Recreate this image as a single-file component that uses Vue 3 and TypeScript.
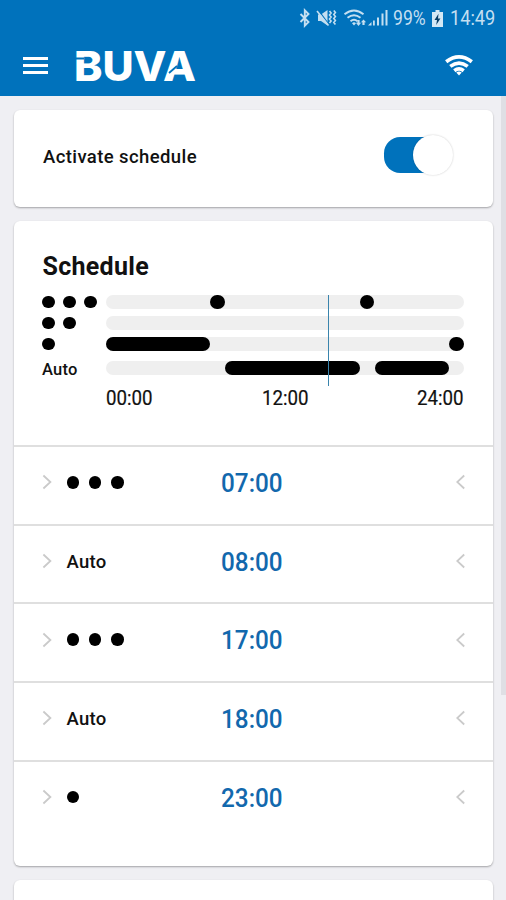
<script setup lang="ts">
interface Segment { from: number; to: number }
interface Track { level: number; segments: Segment[] }
interface Entry { level: number; time: string }

const tracks: Track[] = [
  { level: 3, segments: [{ from: 7, to: 8 }, { from: 17, to: 18 }] },
  { level: 2, segments: [] },
  { level: 1, segments: [{ from: 0, to: 7 }, { from: 23, to: 24 }] },
  { level: 0, segments: [{ from: 8, to: 17 }, { from: 18, to: 23 }] },
]
const entries: Entry[] = [
  { level: 3, time: '07:00' },
  { level: 0, time: '08:00' },
  { level: 3, time: '17:00' },
  { level: 0, time: '18:00' },
  { level: 1, time: '23:00' },
]
const now = 14 + 51 / 60
const pct = (hours: number) => `${(hours / 24) * 100}%`
</script>

<template>
  <div class="screen">
    <header class="header">
      <div class="status">
        <svg class="status-icons" viewBox="0 0 92 20" width="92" height="20">
          <path d="M2.500 6l8 8-3.700 3.700V2.300l3.700 3.700-8 8" fill="none" stroke="#c4dff1" stroke-width="1.900" />
          <path d="M20 6.500h3l6.500-4.500v15.500l-6.500-4.500h-3z" fill="#c4dff1" />
          <path d="M20.500 2.300l10 13.500" stroke="#0072bc" stroke-width="1.200" />
          <path d="M19 3l11.500 14.500" stroke="#c4dff1" stroke-width="1.600" />
          <path d="M31.500 3l1.600 2-1.600 2 1.600 2-1.600 2 1.600 2-1.600 2M35.800 2.500l1.600 2-1.600 2 1.600 2-1.600 2 1.600 2-1.600 2 1.600 2" fill="none" stroke="#c4dff1" stroke-width="1.600" />
          <path d="M46.500 6.300q9.500-7.600 19 0M49.500 9.800q6.500-5.200 13 0M52.500 13.200q3.500-2.700 7 0" fill="none" stroke="#c4dff1" stroke-width="1.900" />
          <g fill="#c4dff1">
            <path d="M54 15.200q2-1.700 4 0l-2 2.300zM59.400 12h2.200v2.800h1.500L60.500 18l-2.600-3.200h1.500zM64.400 17v-2.800h-1.500L65.500 11.500l2.600 2.700h-1.500V17z" />
            <path d="M73.500 14v3.500H70zM75 12.500h1.800v5H75zM79 9.500h2v8h-2zM83.500 5.500h2v12h-2zM87.500 2h2v15.500h-2z" />
          </g>
        </svg>
        <span class="status-text battery-text">99%</span>
        <svg class="battery" viewBox="0 0 11 17" width="11" height="17">
          <path d="M3.500 0h4v2H11v15H0V2h3.500z" fill="#d3e8f5" />
          <path d="M6.500 3.800L2.500 10h2.500l-.8 5 4.200-6.500H6z" fill="#073d66" />
        </svg>
        <span class="status-text clock">14:49</span>
      </div>
      <div class="toolbar">
        <div class="menu"><i /><i /><i /></div>
        <svg class="logo" viewBox="0 0 126 58" width="126" height="58">
          <text x="2" y="44.500" textLength="122" lengthAdjust="spacingAndGlyphs">BUVA</text>
          <path d="M3 22.500h9M97 37l8-7" stroke="#0072bc" stroke-width="1.800" />
        </svg>
        <svg class="wifi" viewBox="0 0 28 22" width="28" height="22">
          <g fill="none" stroke="#fff" stroke-width="3.700">
            <path d="M1.200 7.700q12.800-9.800 25.600 0M5.300 12.400q8.700-6.600 17.400 0M9.300 16.700q4.700-3.600 9.400 0" />
          </g>
          <path d="M11.300 18.500q2.700-2 5.400 0L14 21.500z" fill="#fff" />
        </svg>
      </div>
    </header>

    <main class="content">
      <section class="card activate">
        <span class="activate-label">Activate schedule</span>
        <div class="switch"><div class="knob" /></div>
      </section>

      <section class="card schedule">
        <div class="overview">
          <h2>Schedule</h2>
          <div class="chart">
            <div class="levels">
              <div v-for="t in tracks" :key="t.level" class="level" :class="{ auto: !t.level }">
                <i v-for="n in t.level" :key="n" class="dot" />
                <span v-if="!t.level">Auto</span>
              </div>
            </div>
            <div class="plot">
              <div v-for="t in tracks" :key="t.level" class="track" :class="{ auto: !t.level }">
                <div
                  v-for="s in t.segments"
                  :key="s.from"
                  class="segment"
                  :style="{ left: pct(s.from), width: pct(s.to - s.from) }"
                />
              </div>
              <div class="now" :style="{ left: pct(now) }" />
              <div class="axis"><span>00:00</span><span>12:00</span><span>24:00</span></div>
            </div>
          </div>
        </div>
        <div v-for="e in entries" :key="e.time" class="row">
          <svg class="chevron" viewBox="0 0 10 16" width="10" height="16"><path d="M1.400 1.500L8.400 8l-7 6.500" /></svg>
          <div class="mode">
            <i v-for="n in e.level" :key="n" class="dot" />
            <span v-if="!e.level">Auto</span>
          </div>
          <span class="time">{{ e.time }}</span>
          <svg class="chevron" viewBox="0 0 10 16" width="10" height="16"><path d="M8.200 1.500L1.200 8l7 6.500" /></svg>
        </div>
      </section>

      <section class="card next" />
      <div class="scrollbar" />
    </main>
  </div>
</template>

<style>
body { margin: 0; }
</style>

<style scoped>
.screen {
  width: 506px;
  height: 900px;
  overflow: hidden;
  display: flex;
  flex-direction: column;
  background: #efeff3;
  color: #111;
  font-family: Roboto, "Liberation Sans", sans-serif;
}
.header { flex: none; height: 96px; background: #0072bc; }
.status { display: flex; align-items: center; height: 36px; padding-left: 298px; }
.status-icons { flex: none; }
.status-text {
  color: #c4dff1;
  font-size: 20px;
  line-height: 20px;
  white-space: nowrap;
  transform-origin: left center;
}
.battery-text { width: 34px; margin-left: 3px; transform: scaleX(.88); }
.battery { flex: none; margin-left: 5px; }
.clock { margin-left: 7px; transform: scaleX(.91); }
.toolbar { display: flex; align-items: center; height: 58px; padding-left: 23px; }
.menu { display: flex; flex-direction: column; gap: 4px; width: 25px; }
.menu i { height: 3px; background: #fff; }
.logo { flex: none; margin-left: 24px; overflow: visible; }
.logo text { fill: #fff; font-family: Inter, sans-serif; font-weight: 800; font-size: 41px; }
.wifi { margin-left: 247px; }
.content { position: relative; flex: none; display: flex; flex-direction: column; gap: 14px; padding: 14px 13px 0 14px; }
.card {
  box-sizing: border-box;
  background: #fff;
  border-radius: 6px;
  box-shadow: 0 1px 2px rgba(0, 0, 0, .32);
}
.activate { display: flex; align-items: center; justify-content: space-between; height: 97px; padding: 0 40px 0 29px; }
.activate-label { font-size: 18.500px; font-weight: 500; letter-spacing: .4px; margin-top: -4px; }
.switch { display: flex; justify-content: flex-end; align-items: center; width: 69px; height: 36px; margin-top: -7px; border-radius: 18px 20px 20px 18px; background: linear-gradient(90deg, #0072bc 45px, transparent 45px); }
.knob { width: 40px; height: 40px; flex: none; border-radius: 50%; background: #fff; box-shadow: 0 0 2px rgba(0, 0, 0, .22); }
.schedule { height: 645px; }
.overview { box-sizing: border-box; height: 224px; padding: 32px 29px 0 28px; }
h2 { margin: 0; padding-left: .500px; font-size: 25px; line-height: 28px; font-weight: 700; letter-spacing: .3px; }
.chart { display: flex; margin-top: 14px; }
.levels { width: 64px; flex: none; }
.level { display: flex; align-items: center; gap: 8.500px; height: 14px; margin-bottom: 7px; }
.level.auto { margin-top: 10px; padding-top: 1px; font-size: 16.500px; letter-spacing: .2px; font-weight: 500; }
.dot { flex: none; width: 12.500px; height: 12.500px; border-radius: 50%; background: #000; }
.plot { position: relative; flex: 1; }
.track { position: relative; height: 14px; margin-bottom: 7px; border-radius: 7px; background: #efefef; }
.track.auto { margin-top: 10px; }
.segment { position: absolute; top: 0; height: 14px; border-radius: 7px; background: #000; }
.now { position: absolute; top: 0; width: 1.500px; height: 91px; background: #3a84ac; }
.axis { display: flex; justify-content: space-between; margin-top: 14px; font-size: 19.500px; line-height: 20px; }
.axis span { transform: scaleX(.96); -webkit-text-stroke: .2px #111; }
.axis span:first-child { transform-origin: left; }
.axis span:last-child { transform-origin: right; }
.row { display: flex; align-items: center; box-sizing: border-box; height: 78.700px; padding: 0 27px 6px 28px; border-top: 2px solid #dfdfdf; }
.mode { display: flex; align-items: center; gap: 9.800px; width: 154.500px; margin-left: 14.500px; font-size: 18.500px; font-weight: 500; letter-spacing: .3px; }
.mode span { padding-top: 1px; }
.time { width: 234.500px; padding-top: 1px; color: #1268ad; font-size: 26px; font-weight: 500; transform: scaleX(.935); transform-origin: left; }
.chevron path { fill: none; stroke: #cacaca; stroke-width: 1.800; }
.next { height: 60px; }
.scrollbar { position: absolute; right: 0; top: 0; width: 5px; height: 599px; background: #dfdfe4; }
</style>
